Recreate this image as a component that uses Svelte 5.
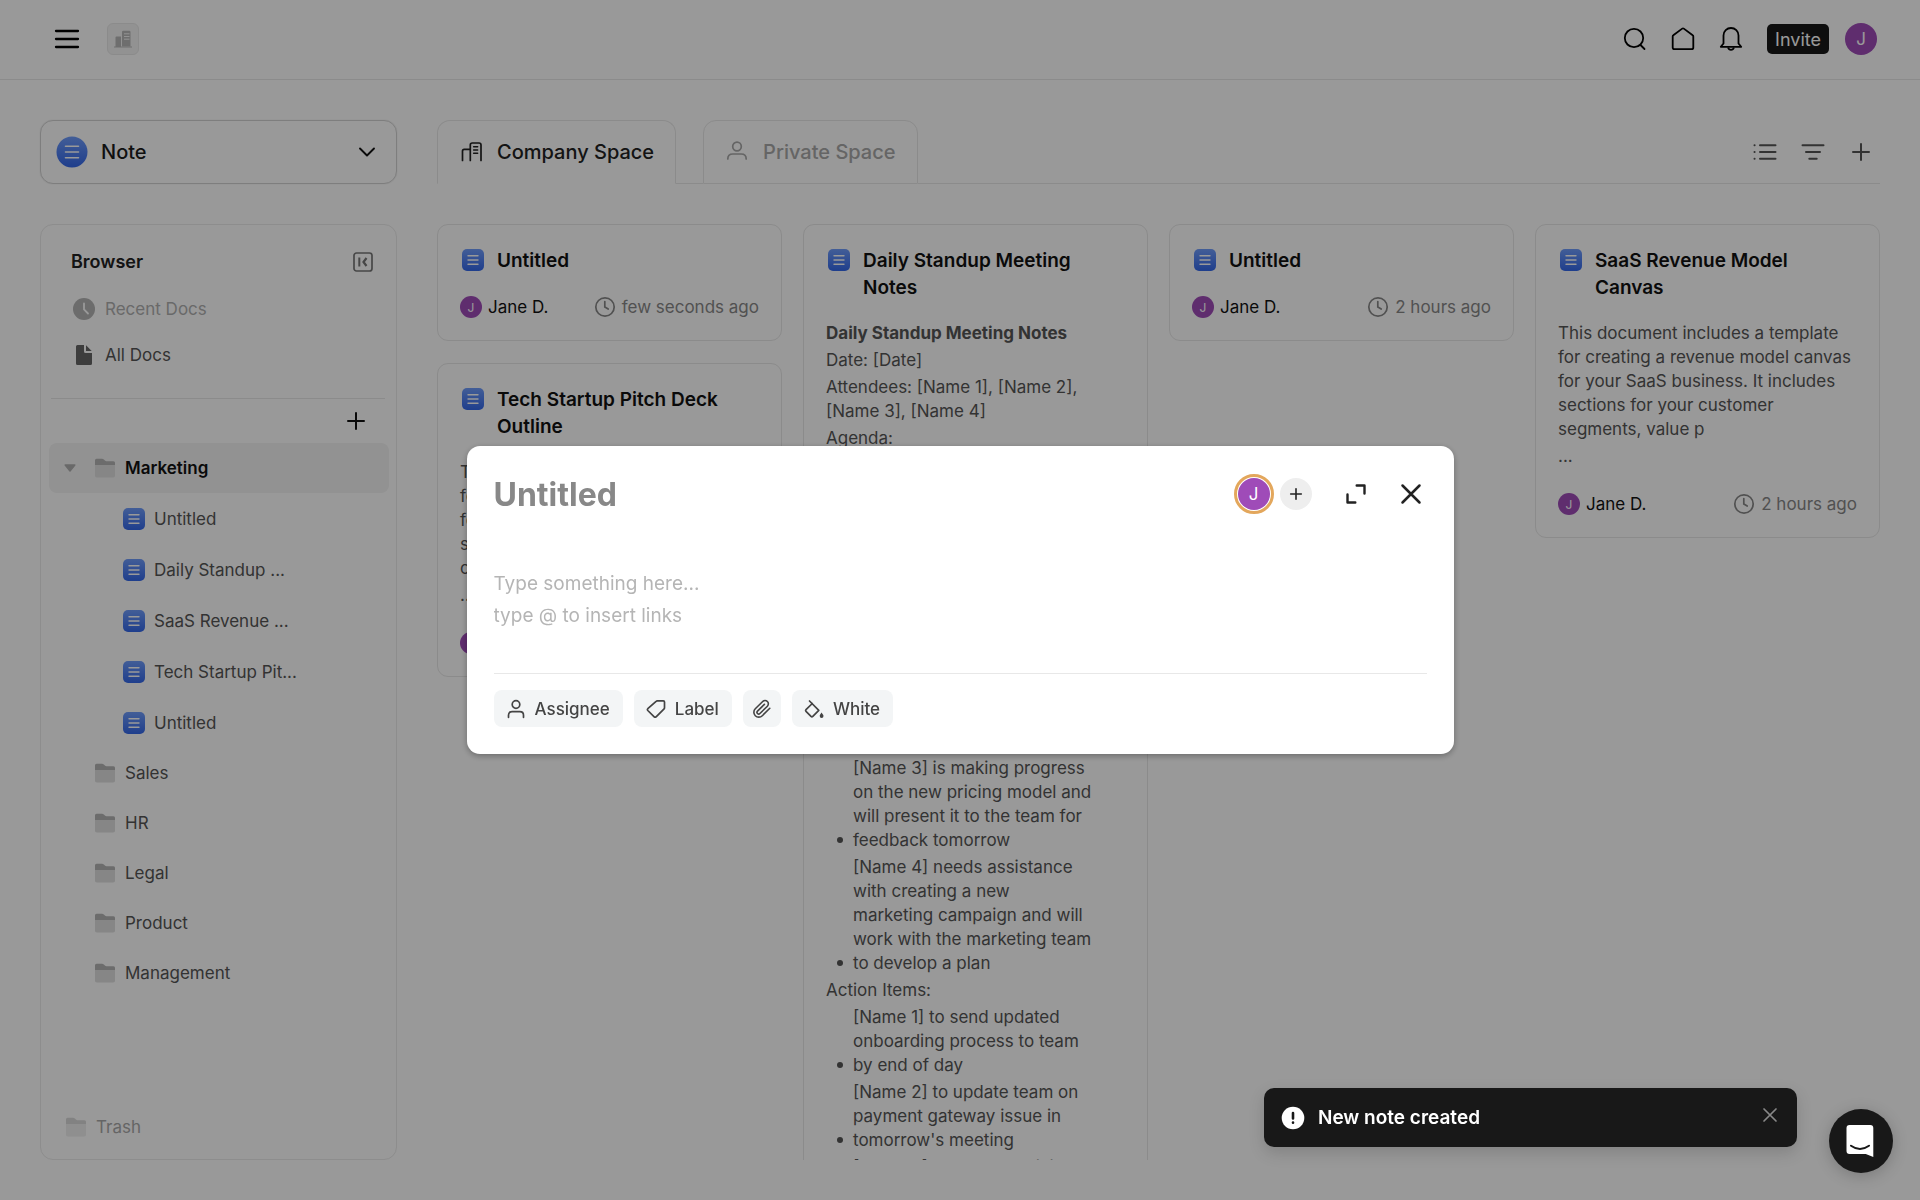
<script lang="ts">
    // Folders of the company space
    let folders = $state([
        {
            name: 'Marketing',
            open: true,
            docs: ['Untitled', 'Daily Standup ...', 'SaaS Revenue ...', 'Tech Startup Pit...', 'Untitled']
        },
        { name: 'Sales', open: false, docs: [] },
        { name: 'HR', open: false, docs: [] },
        { name: 'Legal', open: false, docs: [] },
        { name: 'Product', open: false, docs: [] },
        { name: 'Management', open: false, docs: [] }
    ]);

    type Block = { kind: 'bold' | 'text' | 'item'; text: string };

    const standup: Block[] = [
        { kind: 'bold', text: 'Daily Standup Meeting Notes' },
        { kind: 'text', text: 'Date: [Date]' },
        { kind: 'text', text: 'Attendees: [Name 1], [Name 2], [Name 3], [Name 4]' },
        { kind: 'text', text: 'Agenda:' },
        { kind: 'item', text: 'Review of progress\nand plans for the day' },
        { kind: 'item', text: 'Open questions' },
        { kind: 'text', text: 'Discussion:' },
        { kind: 'item', text: '[Name 1] is working on\nthe new onboarding\nprocess and will share it\nwith the team' },
        { kind: 'item', text: '[Name 2] has an issue\nwith the payment\ngateway and needs help\nfrom the team' },
        { kind: 'item', text: '[Name 3] is making progress\non the new pricing model and will present it to the team for feedback tomorrow' },
        { kind: 'item', text: '[Name 4] needs assistance with creating a new\nmarketing campaign and will work with the marketing team to develop a plan' },
        { kind: 'text', text: 'Action Items:' },
        { kind: 'item', text: '[Name 1] to send updated onboarding process to team by end of day' },
        { kind: 'item', text: "[Name 2] to update team on payment gateway issue in tomorrow's meeting" },
        { kind: 'item', text: '[Name 3] to present pricing model to the team' }
    ];

    const pitch: Block[] = [
        { kind: 'text', text: 'This document includes a template for creating a compelling pitch deck for your tech startup. It includes sections for your customer company, value p' },
        { kind: 'text', text: '...' }
    ];

    const revenue: Block[] = [
        { kind: 'text', text: 'This document includes a template for creating a revenue model canvas for your SaaS business. It includes sections for your customer segments, value p' },
        { kind: 'text', text: '...' }
    ];

    const columns: { title: string; time: string; body: Block[] }[][] = [
        [
            { title: 'Untitled', time: 'few seconds ago', body: [] },
            { title: 'Tech Startup Pitch Deck Outline', time: '2 hours ago', body: pitch }
        ],
        [{ title: 'Daily Standup Meeting Notes', time: '2 hours ago', body: standup }],
        [{ title: 'Untitled', time: '2 hours ago', body: [] }],
        [{ title: 'SaaS Revenue Model Canvas', time: '2 hours ago', body: revenue }]
    ];

    let showModal = $state(true);
    let showToast = $state(true);
</script>

{#snippet docIcon()}
    <svg class="icon22" viewBox="0 0 22 22" aria-hidden="true">
        <rect width="22" height="22" rx="5" fill="url(#blue)" />
        <path d="M6 6.700h10M6 11h10M6 15.300h10" stroke="#fff" stroke-width="1.400" stroke-linecap="round" />
    </svg>
{/snippet}

{#snippet folderIcon()}
    <svg class="icon20" viewBox="0 0 20 20" aria-hidden="true">
        <path d="M0 8V2.200Q0 .7 1.500.7H7q1 0 1.800.8l1.400 1.300q.5.4 1.300.4h7q1.500 0 1.500 1.500V8z" fill="#b5b5b5" />
        <path d="M0 7h20v10.700q0 1.800-1.800 1.800H1.800Q0 19.500 0 17.700z" fill="#e0e0e0" />
    </svg>
{/snippet}

{#snippet plusIcon()}
    <svg class="icon24" viewBox="0 0 24 24" fill="none" stroke="currentColor" stroke-width="2" stroke-linecap="round" aria-hidden="true">
        <path d="M12 4v16M4 12h16" />
    </svg>
{/snippet}

<svg class="defs" aria-hidden="true">
    <defs>
        <linearGradient id="blue" x1="0" y1="0" x2="0" y2="1">
            <stop offset="0" stop-color="#6f9cfc" />
            <stop offset="1" stop-color="#3468ea" />
        </linearGradient>
    </defs>
</svg>

<div class="page">
    <header class="topbar">
        <button class="bare" aria-label="Menu">
            <svg class="icon28" viewBox="0 0 28 28" fill="none" stroke="#000" stroke-width="2.300" stroke-linecap="round">
                <path d="M3 6h22M3 14h22M3 22h22" />
            </svg>
        </button>
        <button class="workspace" aria-label="Workspace">
            <svg class="icon20" viewBox="0 0 20 20">
                <path d="M1 17.500h18v1H1zM2.500 8.500q0-1 1-1H8v10H2.500z" fill="#b8b8b8" />
                <path d="M9 3q0-1.200 1.200-1.200h6.100q1.200 0 1.200 1.200v14.500H9z" fill="#b8b8b8" />
                <path d="M11 4.800h5.500M11 7.500h5.500M11 10.200h5.500" stroke="#f4f4f4" stroke-width="1" />
            </svg>
        </button>
        <nav class="actions">
            <button class="bare" aria-label="Search">
                <svg class="icon24" viewBox="0 0 24 24" fill="none" stroke="#000" stroke-width="1.800" stroke-linecap="round">
                    <circle cx="11" cy="11" r="9.200" />
                    <path d="M17.500 18l4 4" />
                </svg>
            </button>
            <button class="bare" aria-label="Home">
                <svg class="icon24" viewBox="0 0 24 24" fill="none" stroke="#000" stroke-width="1.800" stroke-linejoin="round">
                    <path d="M1.700 9.500q0-.8.600-1.200L11.200 1.600q.8-.6 1.600 0l8.900 6.700q.6.4.6 1.200v11q0 1.700-1.700 1.700H3.400q-1.700 0-1.700-1.700z" />
                </svg>
            </button>
            <button class="bare" aria-label="Notifications">
                <svg class="icon24" viewBox="0 0 24 24" fill="none" stroke="#000" stroke-width="1.800" stroke-linejoin="round">
                    <path d="M4.500 16.500V8.500a7.500 7.500 0 0 1 15 0v8l2.700 3.300H1.800z" />
                    <path d="M9 20.500q.8 2.300 3 2.300t3-2.300" />
                </svg>
            </button>
            <button class="invite">Invite</button>
            <span class="avatar">J</span>
        </nav>
    </header>

    <main class="layout">
        <aside class="side">
            <label class="type-select">
                <svg class="icon32" viewBox="0 0 32 32" aria-hidden="true">
                    <circle cx="16" cy="16" r="15.500" fill="url(#blue)" />
                    <path d="M9.500 10.300h13M9.500 16h13M9.500 21.700h13" stroke="#fff" stroke-width="1.600" stroke-linecap="round" />
                </svg>
                <select aria-label="Document type">
                    <option>Note</option>
                </select>
                <svg class="icon20" viewBox="0 0 20 20" fill="none" stroke="#111" stroke-width="1.900" stroke-linecap="round" stroke-linejoin="round" aria-hidden="true">
                    <path d="M3 6.500l7 7 7-7" />
                </svg>
            </label>

            <section class="browser">
                <div class="browser-head">
                    <h2>Browser</h2>
                    <button class="bare" aria-label="Collapse">
                        <svg class="icon20" viewBox="0 0 20 20" fill="none" stroke="#777" stroke-width="1.700">
                            <rect x="1" y="1" width="18" height="18" rx="2.500" />
                            <path d="M6.300 5.500v9" stroke-width="2" />
                            <path d="M13.500 6l-3 4 3 4" stroke-width="2.200" />
                        </svg>
                    </button>
                </div>
                <a href="#recent" class="quick faded">
                    <svg class="icon24" viewBox="0 0 24 24" aria-hidden="true">
                        <circle cx="12" cy="12" r="11" fill="#b4b4b4" />
                        <path d="M12 6.500v6l4 4" fill="none" stroke="#fff" stroke-width="1.800" stroke-linecap="round" />
                    </svg>
                    Recent Docs
                </a>
                <a href="#all" class="quick">
                    <svg class="icon24" viewBox="0 0 24 24" fill="#666" aria-hidden="true">
                        <path d="M4 3.500Q4 2 5.500 2H12v6.500q0 1.500 1.500 1.500H20v10.500q0 1.500-1.500 1.500h-13Q4 22 4 20.500z" />
                        <path d="M14 2.300L19.700 8H14z" />
                    </svg>
                    All Docs
                </a>
                <div class="add-row">
                    <button class="bare" aria-label="Add folder">{@render plusIcon()}</button>
                </div>
                <ul class="tree">
                    {#each folders as folder}
                        <li>
                            <button class="folder" class:open={folder.open} onclick={() => (folder.open = !folder.open)}>
                                <svg class="caret" viewBox="0 0 12 8" aria-hidden="true">
                                    <path d="M1.200 1h9.600L6 7z" fill="#b0b0b0" stroke="#b0b0b0" stroke-width="1.500" stroke-linejoin="round" />
                                </svg>
                                {@render folderIcon()}
                                {folder.name}
                            </button>
                            {#if folder.open}
                                {#each folder.docs as doc}
                                    <a href="#doc" class="doc">{@render docIcon()}{doc}</a>
                                {/each}
                            {/if}
                        </li>
                    {/each}
                </ul>
                <a href="#trash" class="trash">{@render folderIcon()}Trash</a>
            </section>
        </aside>

        <section class="content">
            <div class="tabs">
                <button class="tab active">
                    <svg class="icon24" viewBox="0 0 24 24" fill="none" stroke="currentColor" stroke-width="1.700" stroke-linecap="round" aria-hidden="true">
                        <path d="M3.500 20.500V11q0-1.700 1.700-1.700h5.600M11.300 20.500V5q0-2 2-2h6.700q2 0 2 2v15.500" />
                        <path d="M14.600 6.700h4.100M14.600 10h4.100M14.600 13.300h4.100" stroke-width="1.400" />
                    </svg>
                    Company Space
                </button>
                <button class="tab">
                    <svg class="icon24" viewBox="0 0 24 24" fill="none" stroke="currentColor" stroke-width="1.700" stroke-linecap="round" aria-hidden="true">
                        <circle cx="12" cy="6.500" r="4.300" />
                        <path d="M2.800 19q0-5 5-5h8.400q5 0 5 5" />
                    </svg>
                    Private Space
                </button>
                <div class="tools">
                    <button class="bare" aria-label="List view">
                        <svg class="icon24" viewBox="0 0 24 24" fill="none" stroke="currentColor" stroke-width="2" stroke-linecap="round">
                            <path d="M7 5.300h15.500M7 12h15.500M7 18.700h15.500M1.500 5.300h.1M1.500 12h.1M1.500 18.700h.1" />
                        </svg>
                    </button>
                    <button class="bare" aria-label="Filter">
                        <svg class="icon24" viewBox="0 0 24 24" fill="none" stroke="currentColor" stroke-width="2" stroke-linecap="round">
                            <path d="M1.500 5.300h21M5 12h14M8.300 18.700h7.400" />
                        </svg>
                    </button>
                    <button class="bare" aria-label="Add note">{@render plusIcon()}</button>
                </div>
            </div>

            <div class="board">
                {#each columns as column}
                    <div class="column">
                        {#each column as card}
                            <article class="card">
                                <div class="card-title">
                                    {@render docIcon()}
                                    <h3>{card.title}</h3>
                                </div>
                                {#if card.body.length}
                                    <div class="card-body">
                                        {#each card.body as block}
                                            <p class={block.kind}><span>{block.text}</span></p>
                                        {/each}
                                    </div>
                                {/if}
                                <div class="card-foot">
                                    <span class="avatar small">J</span>
                                    <span class="author">Jane D.</span>
                                    <svg class="icon22" viewBox="0 0 22 22" fill="none" stroke="currentColor" stroke-width="1.700" stroke-linecap="round" aria-hidden="true">
                                        <circle cx="11" cy="11" r="9.200" />
                                        <path d="M10.800 5.500V11l3.400 2" />
                                    </svg>
                                    <time>{card.time}</time>
                                </div>
                            </article>
                        {/each}
                    </div>
                {/each}
            </div>
        </section>
    </main>
</div>

{#if showModal}
    <div class="overlay">
        <div class="modal" role="dialog" aria-label="New note">
            <div class="modal-head">
                <input class="note-title" type="text" placeholder="Untitled" aria-label="Note title" />
                <span class="avatar ring">J</span>
                <button class="add-user" aria-label="Add member">
                    <svg class="icon20" viewBox="0 0 20 20" stroke="#222" stroke-width="1.600" stroke-linecap="round">
                        <path d="M10 4.700v10.600M4.700 10h10.600" />
                    </svg>
                </button>
                <button class="bare expand" aria-label="Expand">
                    <svg class="icon24" viewBox="0 0 24 24" fill="none" stroke="#222" stroke-width="2.400" stroke-linecap="round" stroke-linejoin="round">
                        <path d="M12.700 3.500h7.800v8M3.500 12.500v8h7.800" />
                    </svg>
                </button>
                <button class="bare" aria-label="Close" onclick={() => (showModal = false)}>
                    <svg class="icon28" viewBox="0 0 28 28" stroke="#222" stroke-width="2.500" stroke-linecap="round">
                        <path d="M5.500 5.500l17 17M22.500 5.500l-17 17" />
                    </svg>
                </button>
            </div>
            <textarea class="note-text" rows="2" aria-label="Note text" placeholder={'Type something here...\ntype @ to insert links'}></textarea>
            <div class="modal-foot">
                <button class="chip">
                    <svg class="icon20" viewBox="0 0 20 20" fill="none" stroke="currentColor" stroke-width="1.700" stroke-linecap="round" aria-hidden="true">
                        <circle cx="10" cy="5.500" r="3.800" />
                        <path d="M2.500 18.300v-2q0-3.600 3.600-3.600h7.800q3.600 0 3.600 3.600v2" />
                    </svg>
                    Assignee
                </button>
                <button class="chip">
                    <svg class="icon20" viewBox="0 0 20 20" fill="none" stroke="currentColor" stroke-width="1.700" stroke-linejoin="round" aria-hidden="true">
                        <path d="M11.300 1.800h6q1.200 0 1.200 1.200v5.800q0 .6-.4 1l-8 8q-1 .8-1.900 0L1.800 11.500q-.8-.9 0-1.800l8.300-7.400q.5-.5 1.200-.5z" />
                    </svg>
                    Label
                </button>
                <button class="chip only" aria-label="Attach file">
                    <svg class="icon20" viewBox="0 0 20 20" fill="none" stroke="currentColor" stroke-width="1.600" stroke-linecap="round" aria-hidden="true">
                        <path d="M17.800 9.300l-7.500 7.400a4.900 4.900 0 0 1-7-7L10.700 2.500a3.250 3.250 0 0 1 4.700 4.700l-7.500 7.300a1.650 1.650 0 0 1-2.400-2.400l6.900-6.700" />
                    </svg>
                </button>
                <button class="chip">
                    <svg class="icon20" viewBox="0 0 20 20" fill="none" stroke="currentColor" stroke-width="1.700" stroke-linecap="round" stroke-linejoin="round" aria-hidden="true">
                        <path d="M5.500 2l9.300 9.300-6 6q-.9.900-1.800 0l-5-5q-.8-.8 0-1.700L8.300 4.500" />
                        <path d="M17.500 13.500q2 2.500 2 3.500a1.900 1.900 0 0 1-3.800 0q0-1 1.800-3.500z" fill="currentColor" stroke="none" />
                    </svg>
                    White
                </button>
            </div>
        </div>
    </div>
{/if}

{#if showToast}
    <div class="toast" role="status">
        <svg class="icon24" viewBox="0 0 24 24" aria-hidden="true">
            <circle cx="12" cy="12" r="11.300" fill="#fff" />
            <path d="M12 7v5.500M12 16.500v.2" stroke="#181818" stroke-width="2.600" stroke-linecap="round" />
        </svg>
        <span>New note created</span>
        <button class="bare" aria-label="Dismiss" onclick={() => (showToast = false)}>
            <svg class="icon20" viewBox="0 0 20 20" stroke="#888" stroke-width="1.700" stroke-linecap="round">
                <path d="M4 4l12 12M16 4L4 16" />
            </svg>
        </button>
    </div>
{/if}

<button class="chat" aria-label="Open chat">
    <svg class="icon32" viewBox="0 0 32 32">
        <path d="M4.500 0h20.800q3 0 3 3v29l-7.500-3H4.500q-3 0-3-3V3q0-3 3-3z" fill="#fff" />
        <path d="M6 20.700q9 6.500 18 0" fill="none" stroke="#181818" stroke-width="2" stroke-linecap="round" />
    </svg>
</button>

<style>
    :global(body) {
        margin: 0;
        background: #fff;
        font-family: Inter, 'Liberation Sans', sans-serif;
        font-size: 17px;
        color: #555;
    }

    button,
    input,
    select,
    textarea {
        font: inherit;
        color: inherit;
        border: none;
        background: none;
        padding: 0;
        margin: 0;
    }

    button {
        cursor: pointer;
    }

    a {
        color: inherit;
        text-decoration: none;
    }

    h2,
    h3,
    p,
    ul {
        margin: 0;
        padding: 0;
        list-style: none;
    }

    svg {
        display: block;
        flex: none;
    }

    .defs {
        position: absolute;
        width: 0;
        height: 0;
    }

    .icon20 {
        width: 20px;
        height: 20px;
    }

    .icon22 {
        width: 22px;
        height: 22px;
    }

    .icon24 {
        width: 24px;
        height: 24px;
    }

    .icon28 {
        width: 28px;
        height: 28px;
    }

    .icon32 {
        width: 32px;
        height: 32px;
    }

    .bare {
        display: flex;
        align-items: center;
        justify-content: center;
    }

    .page {
        display: flex;
        flex-direction: column;
        height: 100vh;
    }

    .topbar {
        display: flex;
        align-items: center;
        gap: 26px;
        height: 78px;
        padding: 0 43px 1px 53px;
        border-bottom: 1px solid #e8e8e8;
    }

    .workspace {
        display: flex;
        align-items: center;
        justify-content: center;
        width: 32px;
        height: 32px;
        box-sizing: border-box;
        border: 1px solid #e8e8e8;
        border-radius: 6px;
        background: #f4f4f4;
    }

    .actions {
        display: flex;
        align-items: center;
        gap: 24px;
        margin-left: auto;
    }

    .invite {
        height: 30px;
        padding: 0 8px;
        border-radius: 5px;
        background: #181818;
        color: #fff;
        font-size: 18px;
    }

    .avatar {
        display: flex;
        align-items: center;
        justify-content: center;
        flex: none;
        width: 32px;
        height: 32px;
        border-radius: 50%;
        background: #9f4bb8;
        color: #fff;
    }

    .actions .avatar {
        margin-left: -8px;
    }

    .avatar.small {
        width: 22px;
        height: 22px;
        font-size: 12px;
    }

    .layout {
        display: flex;
        flex: 1;
        gap: 40px;
        min-height: 0;
        padding: 40px;
    }

    .side {
        display: flex;
        flex-direction: column;
        gap: 40px;
        flex: none;
        width: 357px;
    }

    .type-select {
        display: flex;
        align-items: center;
        gap: 13px;
        height: 64px;
        box-sizing: border-box;
        padding: 0 19px 0 15px;
        border: 1px solid #d2d2d2;
        border-radius: 13px;
        box-shadow: 0 0 1px #d2d2d2;
    }

    .type-select select {
        flex: 1;
        appearance: none;
        font-size: 20px;
        font-weight: 500;
        color: #1c1c1c;
    }

    .browser {
        display: flex;
        flex-direction: column;
        flex: 1;
        min-height: 0;
        box-sizing: border-box;
        padding: 13px 7px 7px 8px;
        border: 1px solid #ebebeb;
        border-radius: 13px;
    }

    .browser-head {
        display: flex;
        align-items: center;
        justify-content: space-between;
        height: 47px;
        padding: 0 16px 0 22px;
    }

    .browser-head h2 {
        font-size: 18px;
        font-weight: 600;
        color: #222;
    }

    .quick {
        display: flex;
        align-items: center;
        gap: 9px;
        height: 45px;
        padding-left: 23px;
    }

    .quick.faded {
        height: 47px;
        color: #b0b0b0;
    }

    .add-row {
        display: flex;
        justify-content: flex-end;
        margin: 21px 4px 0 2px;
        padding: 10px 17px;
        border-top: 1px solid #e8e8e8;
        color: #111;
    }

    .tree {
        flex: 1;
        min-height: 0;
        overflow: hidden;
    }

    .folder {
        display: flex;
        align-items: center;
        gap: 10px;
        width: 100%;
        height: 50px;
        padding-left: 15px;
        border-radius: 8px;
    }

    .folder .caret {
        width: 12px;
        height: 8px;
        margin-right: 9px;
        visibility: hidden;
    }

    .folder.open .caret {
        visibility: visible;
    }

    .folder.open {
        background: #f3f3f3;
        color: #111;
        font-weight: 600;
    }

    .doc {
        display: flex;
        align-items: center;
        gap: 9px;
        height: 51px;
        padding-left: 74px;
    }

    .trash {
        display: flex;
        align-items: center;
        gap: 10px;
        height: 50px;
        padding-left: 17px;
        opacity: 0.5;
    }

    .content {
        display: flex;
        flex-direction: column;
        gap: 40px;
        flex: 1;
        min-width: 0;
    }

    .tabs {
        display: flex;
        height: 64px;
    }

    .tab {
        display: flex;
        align-items: center;
        gap: 14px;
        box-sizing: border-box;
        padding: 0 21px;
        border: 1px solid #e8e8e8;
        border-radius: 13px 13px 0 0;
        font-size: 20px;
        font-weight: 500;
        color: #a8a8a8;
    }

    .tab.active {
        border-bottom-color: transparent;
        color: #222;
    }

    .tab + .tab {
        margin-left: 27px;
        position: relative;
    }

    /* baseline between the two tabs */
    .tab + .tab::before {
        content: '';
        position: absolute;
        left: -28px;
        bottom: -1px;
        width: 27px;
        border-bottom: 1px solid #e8e8e8;
    }

    .tools {
        display: flex;
        align-items: center;
        justify-content: flex-end;
        gap: 24px;
        flex: 1;
        padding-right: 7px;
        border-bottom: 1px solid #e8e8e8;
        color: #555;
    }

    .board {
        display: grid;
        grid-template-columns: repeat(4, minmax(0, 1fr));
        gap: 21px;
        flex: 1;
        min-height: 0;
        overflow: hidden;
    }

    .column {
        display: flex;
        flex-direction: column;
        gap: 22px;
        min-height: 0;
    }

    .card {
        flex: none;
        padding: 22px;
        border: 1px solid #e8e8e8;
        border-radius: 11px;
    }

    .card-title {
        display: flex;
        gap: 13px;
        padding-left: 2px;
    }

    .card-title :global(svg) {
        margin-top: 2px;
    }

    .card-title h3 {
        font-size: 19px;
        font-weight: 600;
        line-height: 27px;
        color: #111;
    }

    .card-body {
        display: flex;
        flex-direction: column;
        gap: 3px;
        margin: 20px 0 25px;
        padding-right: 4px;
        line-height: 24px;
        white-space: pre-line;
    }

    .card-body .bold {
        font-weight: 700;
    }

    .card-body .item {
        display: flex;
        align-items: flex-end;
        padding-right: 24px;
    }

    .card-body .item::before {
        content: '';
        flex: none;
        width: 6px;
        height: 6px;
        margin: 0 10px 9px 11px;
        border-radius: 50%;
        background: #555;
    }

    .card-foot {
        display: flex;
        align-items: center;
        gap: 6px;
        height: 22px;
        color: #888;
    }

    .card-title + .card-foot {
        margin-top: 22px;
    }

    .author {
        margin-right: auto;
        color: #111;
    }

    .overlay {
        position: fixed;
        inset: 0;
        display: flex;
        align-items: center;
        justify-content: center;
        background: rgba(0, 0, 0, 0.4);
    }

    .modal {
        width: 987px;
        max-width: 90%;
        box-sizing: border-box;
        padding: 27px;
        border-radius: 13px;
        background: #fff;
        box-shadow: 0 2px 6px rgba(0, 0, 0, 0.3);
    }

    .modal-head {
        display: flex;
        align-items: center;
        height: 42px;
        padding-right: 2px;
    }

    .note-title {
        flex: 1;
        min-width: 0;
        font-size: 32px;
        font-weight: 700;
    }

    .note-title::placeholder {
        color: #888;
    }

    .ring {
        margin-right: 10px;
        outline: 3px solid #e3a75c;
        outline-offset: 1px;
    }

    .add-user {
        display: flex;
        align-items: center;
        justify-content: center;
        width: 32px;
        height: 32px;
        border-radius: 50%;
        background: #eee;
    }

    .expand {
        margin: 0 29px 0 32px;
    }

    .note-text {
        display: block;
        width: 100%;
        height: 64px;
        margin-top: 53px;
        resize: none;
        overflow: hidden;
        font-size: 19px;
        line-height: 32px;
    }

    .note-text::placeholder {
        color: #b5b5b5;
    }

    .modal-foot {
        display: flex;
        gap: 11px;
        margin-top: 41px;
        padding-top: 16px;
        border-top: 1px solid #e8e8e8;
    }

    .chip {
        display: flex;
        align-items: center;
        gap: 9px;
        height: 37px;
        padding: 0 13px 0 12px;
        border-radius: 8px;
        background: #f3f5f6;
        color: #444;
        font-weight: 500;
    }

    .chip.only {
        padding: 0 9px;
    }

    .toast {
        position: fixed;
        right: 123px;
        bottom: 53px;
        display: flex;
        align-items: center;
        gap: 13px;
        width: 533px;
        height: 59px;
        box-sizing: border-box;
        padding: 0 17px;
        border-radius: 10px;
        background: #181818;
        color: #fff;
        font-size: 19px;
        font-weight: 600;
        box-shadow: 0 6px 16px rgba(0, 0, 0, 0.15);
    }

    .toast .bare {
        margin: 0 0 5px auto;
    }

    .chat {
        position: fixed;
        right: 27px;
        bottom: 27px;
        display: flex;
        align-items: center;
        justify-content: center;
        width: 64px;
        height: 64px;
        border-radius: 50%;
        background: #181818;
        box-shadow: 0 3px 16px rgba(0, 0, 0, 0.2);
    }
</style>
